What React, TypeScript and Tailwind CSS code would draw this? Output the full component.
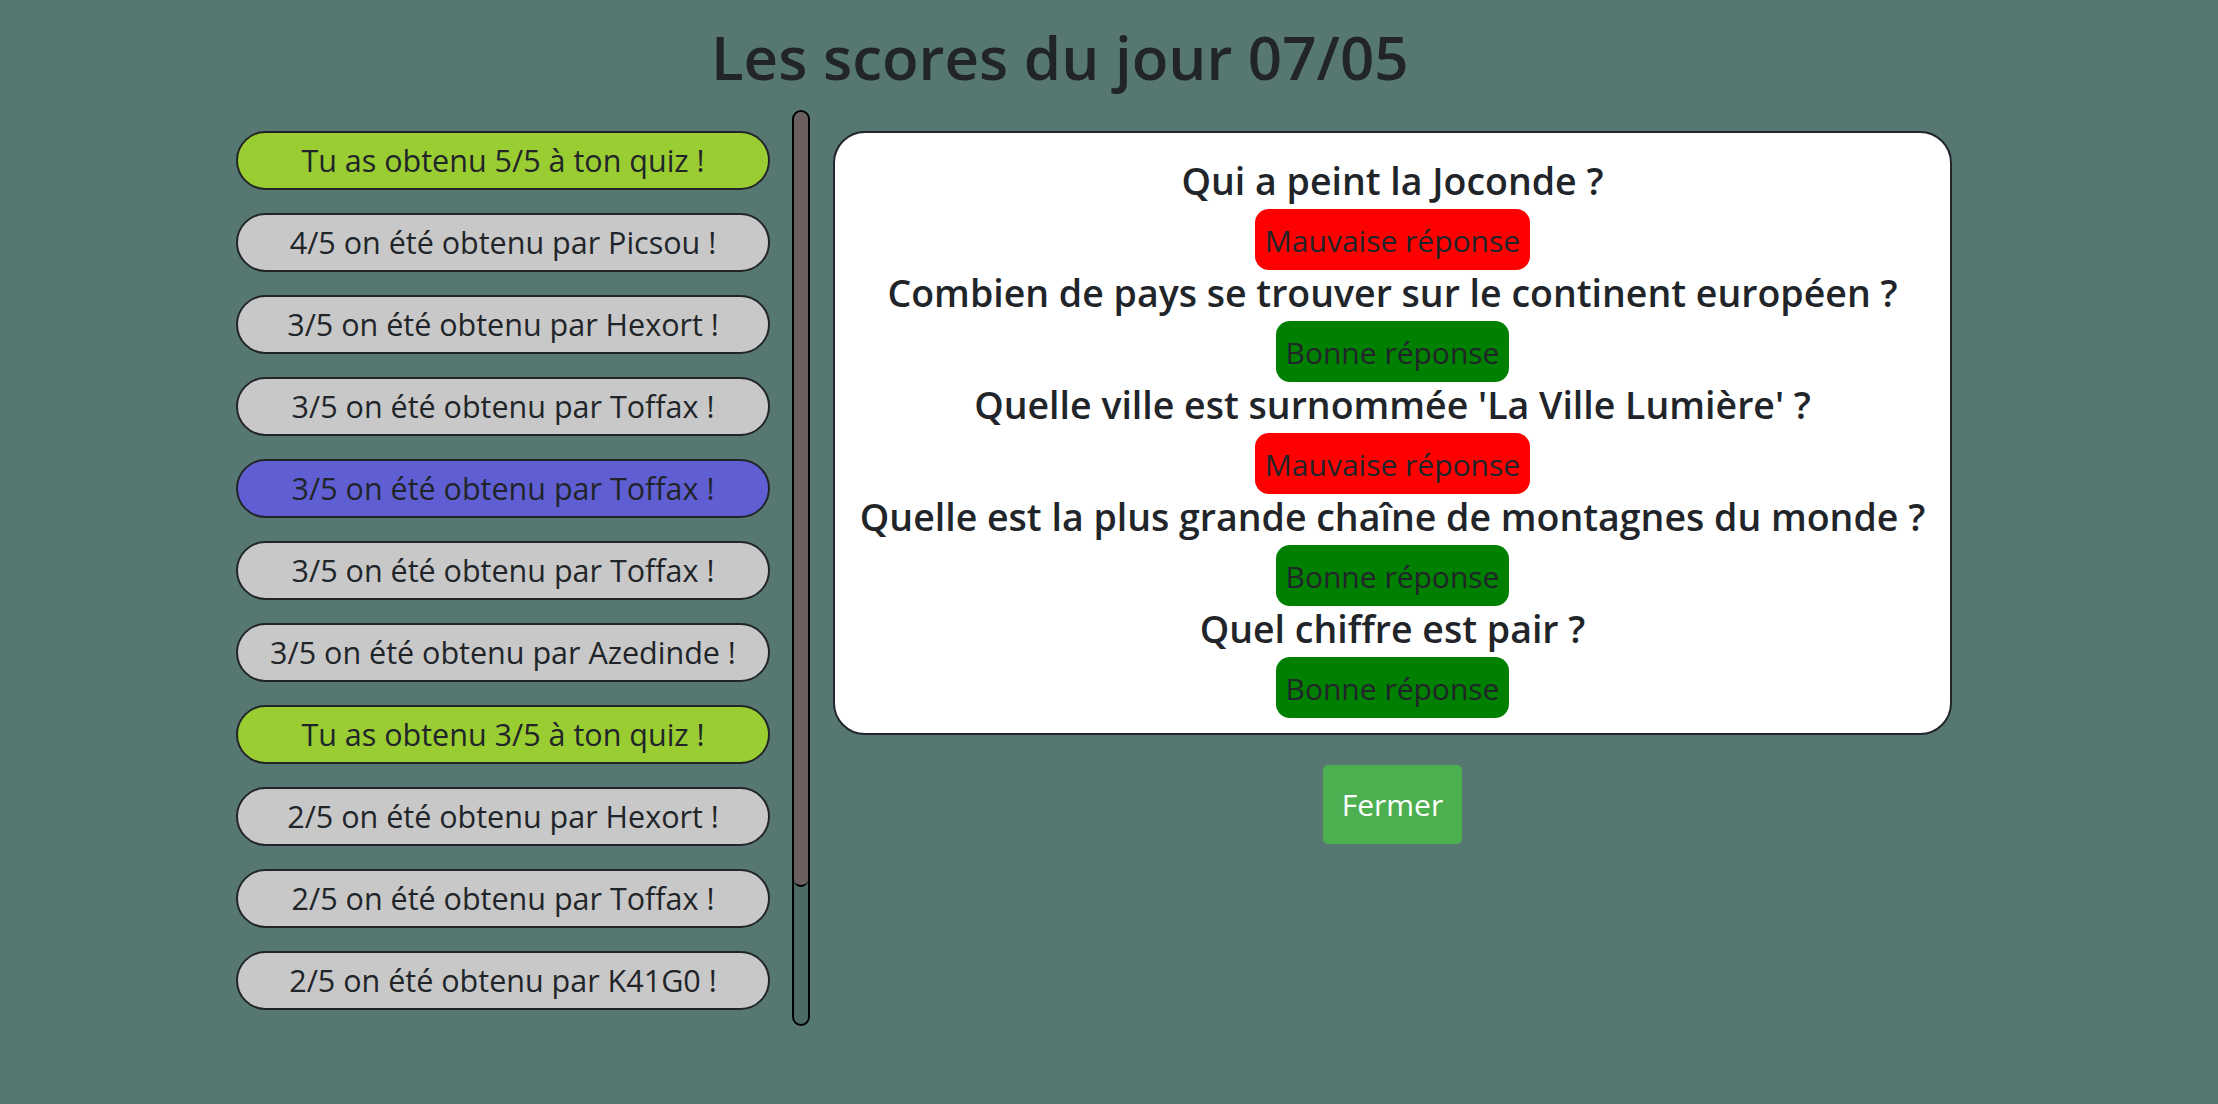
const SCORES = [
  { text: "Tu as obtenu 5/5 à ton quiz !", tone: "mine" },
  { text: "4/5 on été obtenu par Picsou !", tone: "other" },
  { text: "3/5 on été obtenu par Hexort !", tone: "other" },
  { text: "3/5 on été obtenu par Toffax !", tone: "other" },
  { text: "3/5 on été obtenu par Toffax !", tone: "selected" },
  { text: "3/5 on été obtenu par Toffax !", tone: "other" },
  { text: "3/5 on été obtenu par Azedinde !", tone: "other" },
  { text: "Tu as obtenu 3/5 à ton quiz !", tone: "mine" },
  { text: "2/5 on été obtenu par Hexort !", tone: "other" },
  { text: "2/5 on été obtenu par Toffax !", tone: "other" },
  { text: "2/5 on été obtenu par K41G0 !", tone: "other" },
];

const TONES: Record<string, string> = {
  mine: "bg-[#9acd32]",
  other: "bg-[#c8c8c8]",
  selected: "bg-[#5f5fd3]",
};

const QUESTIONS = [
  { q: "Qui a peint la Joconde ?", ok: false },
  { q: "Combien de pays se trouver sur le continent européen ?", ok: true },
  { q: "Quelle ville est surnommée 'La Ville Lumière' ?", ok: false },
  { q: "Quelle est la plus grande chaîne de montagnes du monde ?", ok: true },
  { q: "Quel chiffre est pair ?", ok: true },
];

export default function App() {
  return (
    <main className="min-h-screen w-full bg-[#577872] font-['Open_Sans',sans-serif] text-[#212529]">
      <h1 className="ml-[711px] pt-[21px] text-[60px] font-semibold leading-[72px] whitespace-nowrap">
        Les scores du jour 07/05
      </h1>

      <div className="mt-[17px] ml-[236px] flex items-start">
        {/* score list with its scrollbar */}
        <div className="flex items-start">
          <div className="flex w-[534px] flex-col gap-[23px] pt-[21px]">
            {SCORES.map((s, i) => (
              <div
                key={i}
                className={`flex h-[59px] items-center justify-center rounded-full border-[2.5px] border-[#222528] text-[30.5px] leading-[45px] ${TONES[s.tone]}`}
              >
                {s.text}
              </div>
            ))}
          </div>
          <div className="ml-[22px] h-[916px] w-[18px] overflow-hidden rounded-full border-2 border-black bg-[#4d6b65]">
            <div className="h-[775px] w-full rounded-full border-b-2 border-black bg-[#6b5f5f]" />
          </div>
        </div>

        {/* answers */}
        <div className="ml-[23px] flex flex-col items-center pt-[21px]">
          <div className="flex w-[1119px] flex-col items-center rounded-[32px] border-[2.5px] border-[#212529] bg-white pt-[25px] pb-[15px]">
            {QUESTIONS.map((item) => (
              <div key={item.q} className="flex flex-col items-center">
                <h3 className="pb-[6px] text-[37.5px] font-semibold leading-[45px] whitespace-nowrap">{item.q}</h3>
                <span
                  className={`h-[61px] rounded-[14px] px-[10px] pt-[9px] pb-[7px] text-[30px] leading-[45px] ${
                    item.ok ? "bg-[#008000]" : "bg-[#ff0000]"
                  }`}
                >
                  {item.ok ? "Bonne réponse" : "Mauvaise réponse"}
                </span>
              </div>
            ))}
          </div>
          <button className="mt-[30px] h-[79px] rounded-[5px] bg-[#4caf50] px-[19px] text-[30px] leading-[45px] text-white">
            Fermer
          </button>
        </div>
      </div>
    </main>
  );
}
